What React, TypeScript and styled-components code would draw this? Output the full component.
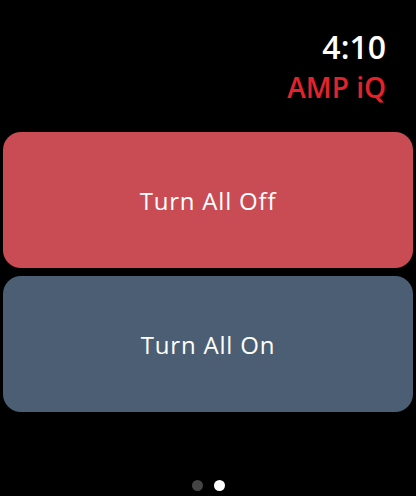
import styled, { createGlobalStyle } from 'styled-components';

const GlobalStyle = createGlobalStyle`
	body {
		margin: 0;
		background: #000;
		font-family: 'Open Sans', 'Noto Sans', sans-serif;
	}
`;

export default function App() {
	return (
		<>
			<GlobalStyle />
			<Screen>
				<Header>
					<Time>4:10</Time>
					<Title>AMP iQ</Title>
				</Header>
				<ButtonList>
					<ActionButton $tone="#c94c55">Turn All Off</ActionButton>
					<ActionButton $tone="#4b5e73">Turn All On</ActionButton>
				</ButtonList>
				<Pager>
					<Dot />
					<Dot $active />
				</Pager>
			</Screen>
		</>
	);
}

const Screen = styled.div`
	width: 416px;
	height: 496px;
	background: #000;

	display: flex;
	flex-direction: column;
`;

const Header = styled.div`
	display: flex;
	flex-direction: column;
	align-items: flex-end;

	padding-top: 28px;
	padding-right: 30px;
	height: 132px;
	box-sizing: border-box;
`;

const Time = styled.div`
	color: #fff;
	font-size: 32px;
	line-height: 38px;
	font-weight: 600;
`;

const Title = styled.div`
	margin-top: 4px;
	color: #e3232c;
	font-size: 28px;
	line-height: 34px;
	font-weight: 600;
`;

const ButtonList = styled.div`
	display: flex;
	flex-direction: column;
	gap: 8px;

	padding: 0 3px;
`;

const ActionButton = styled.button<{ $tone: string }>`
	height: 136px;
	border: none;
	border-radius: 18px;
	background: ${p => p.$tone};

	color: #fff;
	font-family: 'Open Sans', 'Noto Sans', sans-serif;
	font-size: 24px;
	letter-spacing: 0.8px;
`;

const Pager = styled.div`
	flex: 1;

	display: flex;
	flex-direction: row;
	justify-content: center;
	align-items: flex-end;
	gap: 11px;

	padding-bottom: 5px;
`;

const Dot = styled.div<{ $active?: boolean }>`
	width: 11px;
	height: 11px;
	border-radius: 50%;
	background: ${p => (p.$active ? '#fff' : '#444')};
`;
